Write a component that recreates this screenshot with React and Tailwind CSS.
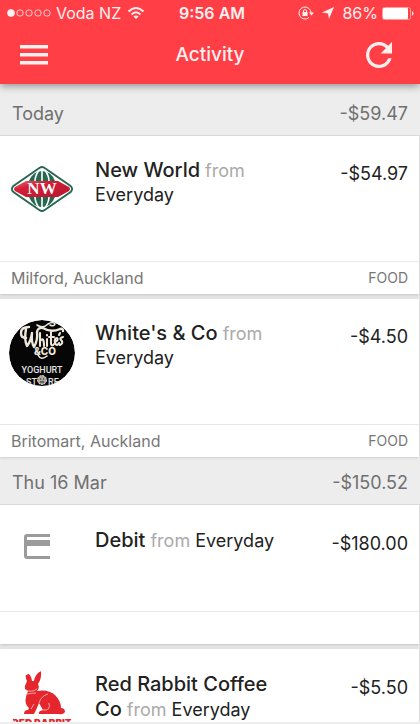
import clsx from 'clsx';

const groups = [
  {
    label: 'Today',
    total: '-$59.47',
    items: [
      { name: 'New World', amount: '-$54.97', place: 'Milford, Auckland', tag: 'FOOD', logo: NewWorldLogo },
      { name: "White's & Co", amount: '-$4.50', place: 'Britomart, Auckland', tag: 'FOOD', logo: WhitesLogo },
    ],
  },
  {
    label: 'Thu 16 Mar',
    total: '-$150.52',
    items: [
      { name: 'Debit', amount: '-$180.00', logo: CardLogo },
      { name: 'Red Rabbit Coffee Co', amount: '-$5.50', logo: RabbitLogo },
    ],
  },
];

function NewWorldLogo() {
  return (
    <svg viewBox="0 0 66 66" className="size-[66px] shrink-0" role="img" aria-label="New World">
      <defs>
        <linearGradient id="nw-red" x1="0" x2="1" y1="0" y2="1">
          <stop offset="0" stopColor="#e4707a" />
          <stop offset="0.3" stopColor="#d32038" />
          <stop offset="1" stopColor="#b8152f" />
        </linearGradient>
      </defs>
      <g strokeLinejoin="round">
        <path d="M33 14L59 32L33 50L7 32Z" fill="#27674f" stroke="#27674f" strokeWidth="10" />
        <path d="M33 14L59 32L33 50L7 32Z" fill="#fff" stroke="#fff" strokeWidth="6" />
      </g>
      <path d="M20 24Q24 14 33 14Q42 14 46 24ZM20 40Q24 50 33 50Q42 50 46 40Z" fill="#27674f" />
      <path d="M33 13V51M30 13Q26 19 26 24M36 13Q40 19 40 24M30 51Q26 45 26 40M36 51Q40 45 40 40" fill="none" stroke="#fff" strokeWidth="1.6" />
      <path d="M17 24H49L60 30Q62 32 60 34L49 40H17L6 34Q4 32 6 30Z" fill="url(#nw-red)" />
      <text x="33" y="37" textAnchor="middle" fontSize="17" fill="#fff" className="font-['Liberation_Serif',serif] font-bold">NW</text>
    </svg>
  );
}

function WhitesLogo() {
  return (
    <svg viewBox="0 0 66 66" className="size-[66px] shrink-0" role="img" aria-label="White's & Co Yoghurt Store">
      <defs>
        <clipPath id="whites-disc">
          <circle cx="33" cy="33" r="33" />
        </clipPath>
      </defs>
      <g clipPath="url(#whites-disc)">
        <circle cx="33" cy="33" r="33" fill="#060606" />
        <g fill="none" stroke="#eee8dc" strokeLinecap="round" strokeLinejoin="round">
          <path d="M20 7Q12 7 12 13Q12 18 17 18M17 9Q15 20 18 26Q22 21 23 13Q22 22 25 27Q29 20 28 12Q29 7 34 8Q42 13 51 9Q54 8 54 11" strokeWidth="2.4" />
          <path d="M31 13V26M31 21Q35 16 35 26M38 19V26M38 15V15.500M42 12V24Q43 27 45 24M40 17H45M46 22Q50 20 48 18Q45 18 46 23Q48 27 50 23M54 17Q50 18 52 20Q55 23 51 25M51 13L50 15" strokeWidth="2.100" />
          <path d="M28 5Q34 9 39 4Q44 1 46 4Q45 7 41 5M29 35Q32 41 38 36" strokeWidth="1.600" />
        </g>
        <text x="36" y="35" textAnchor="middle" fontSize="10" fill="#eee8dc" className="font-[Inter,sans-serif] font-extrabold">&amp;CO</text>
        <text x="33" y="53" textAnchor="middle" fontSize="9" fill="#e2e2e2" className="font-[Roboto,sans-serif] font-medium">YOGHURT</text>
        <text x="17" y="65" fontSize="9" fill="#e2e2e2" className="font-[Roboto,sans-serif] font-medium">ST</text>
        <text x="39" y="65" fontSize="9" fill="#e2e2e2" className="font-[Roboto,sans-serif] font-medium">RE</text>
        <circle cx="33" cy="60" r="4.500" fill="#a9a39d" stroke="#e4dfd8" strokeDasharray="2 1" />
        <path d="M31 59h1M34 59h1M31 62h4" stroke="#222" />
      </g>
    </svg>
  );
}

function CardLogo() {
  return (
    <svg viewBox="0 0 66 66" className="size-[66px] shrink-0" fill="#9b9b9b" aria-hidden="true">
      <path d="M41 7H18Q15 7 15 10V29Q15 32 18 32H41V29H18V19H41V13H18V10H41Z" />
    </svg>
  );
}

function RabbitLogo() {
  return (
    <svg viewBox="0 0 66 66" className="size-[66px] shrink-0 overflow-hidden rounded-full" role="img" aria-label="Red Rabbit">
      <path
        d="M17 1Q22 3 23 10L25 10Q26 3 32 0Q33 7 29 13Q31 17 28 20Q39 18 46 24Q52 30 52 37Q56 37 56 41Q54 44 50 43H30Q29 40 34 39L30 32L27 39L25 43H15Q15 39 19 39L20 37Q15 33 17 26Q18 22 19 20Q15 19 16 15L18 10Q16 7 17 1Z"
        fill="#e6262d"
      />
      <path d="M17 19Q22 22 28 18M18 23Q24 22 27 22M30 32Q32 25 39 23M34 39Q42 40 40 32M22 38L25 33" fill="none" stroke="#f9c8c8" strokeWidth="0.8" />
      <text x="33" y="56" textAnchor="middle" fontSize="10" fill="#e6262d" className="font-[Inter,sans-serif] font-black">RED RABBIT</text>
    </svg>
  );
}

function StatusBar() {
  return (
    <div className="grid h-[26px] grid-cols-[1fr_auto_1fr] items-center px-1.5 text-base">
      <div className="flex items-center">
        <svg viewBox="0 0 46 10" className="h-2.5 w-[46px]" fill="none" stroke="currentColor" strokeWidth="0.8" aria-hidden="true">
          <circle cx="5" cy="5" r="3.500" fill="currentColor" />
          <circle cx="14" cy="5" r="3.200" />
          <circle cx="23" cy="5" r="3.200" />
          <circle cx="32" cy="5" r="3.200" />
          <circle cx="41" cy="5" r="3.200" />
        </svg>
        <span className="ml-1">Voda NZ</span>
        <svg viewBox="0 0 18 14" className="ml-1.5 h-3.5 w-[18px]" fill="none" stroke="currentColor" strokeWidth="2" aria-hidden="true">
          <path d="M1.500 5.500Q9 -1.500 16.500 5.500M4.500 8.500Q9 4 13.500 8.500" />
          <path d="M9 13L6.500 10.500Q9 8.500 11.500 10.500Z" fill="currentColor" stroke="none" />
        </svg>
      </div>
      <span className="pl-1 font-semibold">9:56 AM</span>
      <div className="flex items-center justify-end">
        <svg viewBox="0 0 16 14" className="h-3.5 w-4" fill="none" stroke="currentColor" aria-hidden="true">
          <path d="M13 7A6 6 0 1 0 11 11.500" />
          <path d="M11 6.500H16L13.500 9.500Z" fill="currentColor" stroke="none" />
          <rect x="4.500" y="6" width="5" height="4" fill="currentColor" stroke="none" />
          <path d="M5.500 6V5Q5.500 3.500 7 3.500T8.500 5V6" />
        </svg>
        <svg viewBox="0 0 12 12" className="ml-2 size-3" fill="currentColor" aria-hidden="true">
          <path d="M12 0L7 12L6 6.500L0 5.500Z" />
        </svg>
        <span className="ml-2">86%</span>
        <svg viewBox="0 0 32 13" className="ml-1 h-[13px] w-8" aria-hidden="true">
          <rect x="0.500" y="0.500" width="28" height="12" rx="2" fill="none" stroke="#ff9da1" />
          <rect x="1" y="1" width="25" height="11" rx="1" fill="#fff" />
          <path d="M30 4Q33 6.500 30 9Z" fill="currentColor" />
        </svg>
      </div>
    </div>
  );
}

function Transaction({ item }) {
  const Logo = item.logo;
  const hasDetails = Boolean(item.place);
  return (
    <li className="mr-px bg-white shadow-sm">
      <div className={clsx('flex items-start pr-[11px] pl-[9px]', hasDetails ? 'h-[125px] pt-[21px]' : 'h-[106px] pt-[22px]')}>
        <Logo />
        <p className="mt-px ml-5 flex-1 text-lg leading-6 text-[#222]">
          <span className="text-[20px] font-medium">{item.name}</span>{' '}
          <span className="text-[#aaa]">from</span> Everyday
        </p>
        <span className="mt-[3px] w-[120px] text-right text-lg text-[#222]">{item.amount}</span>
      </div>
      <div className="flex h-[33px] items-center justify-between border-t border-[#e8e8e8] px-[11px] text-base text-[#777]">
        <span>{item.place}</span>
        <span className="text-sm">{item.tag}</span>
      </div>
    </li>
  );
}

export default function App() {
  return (
    <div className="flex h-screen flex-col overflow-hidden bg-[#e6e6e6] font-[Inter,'Liberation_Sans',sans-serif]">
      <header className="relative z-10 shrink-0 bg-[#ff3e46] text-[#fff0f0] shadow-[0_2px_8px_rgba(0,0,0,0.4)]">
        <StatusBar />
        <div className="grid h-[58px] grid-cols-[1fr_auto_1fr] items-center px-5">
          <button type="button" aria-label="Menu" className="justify-self-start">
            <svg viewBox="0 0 28 20" className="h-5 w-7" fill="currentColor" aria-hidden="true">
              <path d="M0 0H28V3.500H0ZM0 8H28V11.500H0ZM0 16H28V19.500H0Z" />
            </svg>
          </button>
          <h1 className="text-[19px] font-medium">Activity</h1>
          <button type="button" aria-label="Refresh" className="mr-2 justify-self-end">
            <svg viewBox="4 4 16 16" className="size-[26px]" fill="currentColor" aria-hidden="true">
              <path d="M17.650 6.350C16.200 4.900 14.210 4 12 4c-4.420 0-7.990 3.580-7.990 8s3.570 8 7.990 8c3.730 0 6.840-2.550 7.730-6h-2.080c-.82 2.330-3.040 4-5.650 4-3.310 0-6-2.690-6-6s2.690-6 6-6c1.660 0 3.140.69 4.220 1.780L13 11h7V4z" />
            </svg>
          </button>
        </div>
      </header>
      <main className="min-h-0 flex-1 overflow-hidden border-b-2 border-[#ededed]">
        {groups.map((group, index) => (
          <section key={group.label}>
            <h2
              className={clsx(
                'flex items-center justify-between border-b border-[#ddd] bg-[#ededed] px-3 text-lg font-normal text-[#707070]',
                index === 0 ? 'h-[52px] pt-2' : 'h-12 pt-1',
              )}
            >
              <span>{group.label}</span>
              <span>{group.total}</span>
            </h2>
            <ul className="flex flex-col gap-[5px]">
              {group.items.map((item) => (
                <Transaction key={item.name} item={item} />
              ))}
            </ul>
          </section>
        ))}
      </main>
    </div>
  );
}
